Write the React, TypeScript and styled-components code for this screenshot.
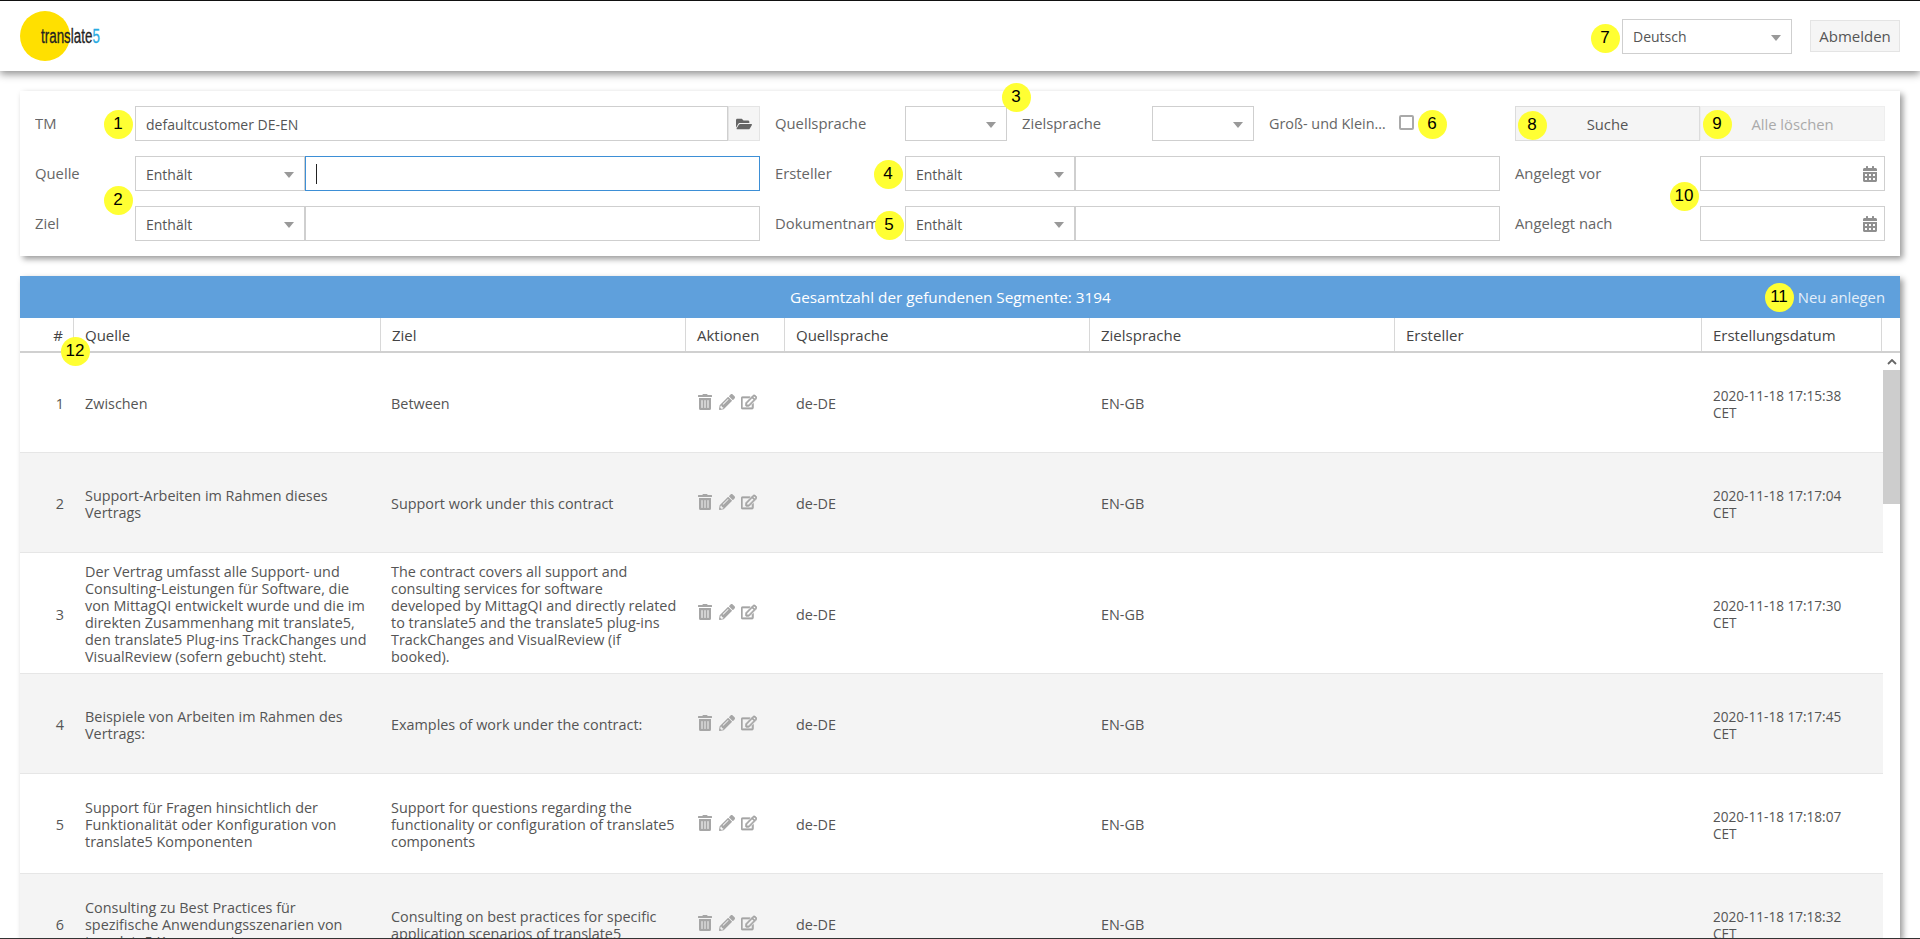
import React from 'react';
import styled, { createGlobalStyle } from 'styled-components';
import {
  FaCalendarAlt,
  FaFolderOpen,
  FaPencilAlt,
  FaRegEdit,
  FaTrashAlt,
} from 'react-icons/fa';

const GlobalStyle = createGlobalStyle`
  html, body {
    margin: 0;
    height: 100%;
    overflow: hidden;
    background: #fff;
  }
  body {
    font-family: "Open Sans", "Liberation Sans", sans-serif;
    font-size: 14px;
    color: #555;
  }
  * {
    box-sizing: border-box;
  }
`;

const Page = styled.div`
  position: relative;
  display: flex;
  flex-direction: column;
  height: 939px;
  overflow: hidden;
  border-top: 1px solid #111;
  border-bottom: 1px solid #333;
`;

const TopBar = styled.header`
  flex: none;
  display: flex;
  align-items: center;
  justify-content: space-between;
  height: 70px;
  padding: 0 20px;
  background: #fff;
  box-shadow: 0 3px 8px rgba(0, 0, 0, 0.45);
`;

const Logo = styled.div`
  display: flex;
  align-items: center;
  width: 50px;
  height: 50px;
  padding-left: 21px;
  border-radius: 50%;
  background: #ffe000;
  white-space: nowrap;
`;

const LogoText = styled.span`
  display: inline-block;
  font-family: "Liberation Sans", sans-serif;
  font-size: 20px;
  color: #222;
  transform: scaleX(0.67);
  transform-origin: left center;
  -webkit-text-stroke: 0.3px #222;
  span {
    color: #29abe2;
    -webkit-text-stroke: 0.3px #29abe2;
  }
`;

const TopActions = styled.div`
  display: flex;
  align-items: center;
`;

const FilterPanel = styled.section`
  flex: none;
  display: grid;
  grid-template-columns: 100px 625px 145px 595px 200px 185px;
  grid-auto-rows: 35px;
  row-gap: 15px;
  align-items: center;
  margin: 20px 20px 0;
  padding: 15px 15px 15px;
  background: #fff;
  box-shadow: 3px 3px 6px rgba(0, 0, 0, 0.4);
`;

const Label = styled.label<{ $inset?: number }>`
  padding-left: ${(p) => p.$inset ?? 0}px;
  margin-top: -1px;
  font-size: 14.8px;
  white-space: nowrap;
  overflow: hidden;
  color: #666;
`;

const InlineLabel = styled.label<{ $width: number; $left: number }>`
  flex: none;
  width: ${(p) => p.$width}px;
  margin-left: ${(p) => p.$left}px;
  margin-top: -1px;
  font-size: 14.8px;
  white-space: nowrap;
  overflow: hidden;
  text-overflow: ellipsis;
  color: #666;
`;

const TruncatedLabel = styled(InlineLabel)`
  font-size: 14.4px;
`;

const FieldGroup = styled.div`
  display: flex;
  height: 35px;
  align-items: center;
`;

const ButtonCell = styled.div`
  padding-left: 15px;
  height: 35px;
`;

const Field = styled.div<{ $focused?: boolean; $width?: number }>`
  position: relative;
  display: flex;
  align-items: center;
  flex: ${(p) => (p.$width ? 'none' : '1')};
  width: ${(p) => (p.$width ? `${p.$width}px` : 'auto')};
  height: 35px;
  padding: 1px 10px 0;
  background: #fff;
  border: 1px solid ${(p) => (p.$focused ? '#3d8fd6' : '#cfcfcf')};
  color: #555;
`;

const Caret = styled.i`
  display: block;
  width: 1px;
  height: 20px;
  background: #222;
`;

const SelectArrow = styled.i`
  position: absolute;
  right: 10px;
  top: 15px;
  width: 0;
  height: 0;
  border-left: 5px solid transparent;
  border-right: 5px solid transparent;
  border-top: 6px solid #999;
`;

const DateIcon = styled(FaCalendarAlt)`
  position: absolute;
  right: 7px;
  top: 9px;
  width: 14px;
  height: 16px;
  color: #8f8f8f;
`;

const FolderButton = styled.button`
  flex: none;
  display: flex;
  align-items: center;
  justify-content: center;
  width: 32px;
  height: 35px;
  padding: 0;
  background: #f5f5f5;
  border: 1px solid #e4e4e4;
  color: #666;
  font-size: 16px;
`;

const ActionButton = styled.button<{ $disabled?: boolean }>`
  width: ${(p) => (p.$disabled ? '185px' : '100%')};
  height: 35px;
  padding: 0;
  background: #f5f5f5;
  border: 1px solid ${(p) => (p.$disabled ? '#eee' : '#dcdcdc')};
  color: ${(p) => (p.$disabled ? '#aaa' : '#555')};
  font: inherit;
  font-size: 14.8px;
`;

const LogoutButton = styled.button`
  width: 90px;
  height: 32px;
  margin-left: 18px;
  padding: 0;
  background: #f5f5f5;
  border: 1px solid #e4e4e4;
  color: #555;
  font: inherit;
  font-size: 15px;
`;

const CheckBox = styled.span`
  flex: none;
  width: 15px;
  height: 15px;
  margin-left: 12px;
  margin-top: -2px;
  background: #fff;
  border: 2px solid #a9a9a9;
  border-radius: 2px;
`;

const Grid = styled.section`
  flex: 1;
  min-height: 0;
  display: flex;
  flex-direction: column;
  margin: 20px 20px 0;
  background: #fff;
  box-shadow: 3px 3px 6px rgba(0, 0, 0, 0.4);
`;

const TitleBar = styled.div`
  flex: none;
  display: flex;
  align-items: center;
  height: 42px;
  padding: 0 15px 0 83px;
  background: #5fa0dc;
  color: #fff;
`;

const Title = styled.div`
  flex: 1;
  text-align: center;
  font-size: 15.3px;
`;

const AddLink = styled.a`
  color: #e4effa;
  font-size: 14.8px;
`;

const columns = '54px 307px 305px 99px 305px 305px 307px 180px';

const HeaderRow = styled.div`
  flex: none;
  display: flex;
  height: 35px;
  border-bottom: 2px solid #d0d0d0;
`;

const HeaderCols = styled.div`
  flex: none;
  display: grid;
  width: 1862px;
  grid-template-columns: ${columns};
`;

const HeaderCell = styled.div<{ $right?: boolean }>`
  display: flex;
  align-items: center;
  justify-content: ${(p) => (p.$right ? 'flex-end' : 'flex-start')};
  padding: 0 10px 0 11px;
  border-right: 1px solid #d8d8d8;
  color: #444;
  font-size: 15px;
`;

const HeaderFiller = styled.div`
  flex: 1;
`;

const Body = styled.div`
  flex: 1;
  min-height: 0;
  display: flex;
  overflow: hidden;
`;

const Rows = styled.div`
  flex: none;
  width: 1863px;
`;

const Row = styled.div<{ $alt: boolean }>`
  display: grid;
  grid-template-columns: ${columns};
  min-height: 100px;
  align-items: center;
  line-height: 17px;
  background: ${(p) => (p.$alt ? '#f4f4f4' : '#fff')};
  border-bottom: 1px solid #e6e6e6;
`;

const Cell = styled.div<{ $right?: boolean }>`
  padding: 10px 10px 8px 11px;
  text-align: ${(p) => (p.$right ? 'right' : 'left')};
  font-size: 14.4px;
`;

const TargetCell = styled(Cell)`
  padding-left: 10px;
  padding-right: 6px;
`;

const DateCell = styled(Cell)`
  padding-right: 30px;
  font-size: 13.6px;
`;

const Actions = styled.div`
  display: flex;
  align-items: center;
  gap: 6px;
  margin-top: -2px;
  padding-left: 11px;
  color: #a6a6a6;
  font-size: 16px;
`;

const EditIcon = styled(FaRegEdit)`
  stroke: currentColor;
  stroke-width: 24;
`;

const ScrollBar = styled.div`
  flex: 1;
  display: flex;
  flex-direction: column;
`;

const ScrollArrow = styled.div`
  display: flex;
  align-items: center;
  justify-content: center;
  height: 17px;
  svg {
    display: block;
  }
`;

const ScrollThumb = styled.div`
  height: 134px;
  background: #cdcdcd;
`;

const Marker = styled.span<{ $x: number; $y: number }>`
  position: absolute;
  left: ${(p) => p.$x - 14.5}px;
  top: ${(p) => p.$y - 15.5}px;
  display: flex;
  align-items: center;
  justify-content: center;
  width: 29px;
  height: 29px;
  border-radius: 50%;
  background: #ffff33;
  color: #000;
  font-family: "Liberation Sans", sans-serif;
  font-size: 17px;
`;

const markers: [number, number, number][] = [
  [1, 118, 124],
  [2, 118, 200],
  [3, 1016, 97],
  [4, 888, 174],
  [5, 889, 225],
  [6, 1432, 124],
  [7, 1605, 38],
  [8, 1532, 125],
  [9, 1717, 124],
  [10, 1684, 196],
  [11, 1779, 297],
  [12, 75, 351],
];

const headers = [
  '#',
  'Quelle',
  'Ziel',
  'Aktionen',
  'Quellsprache',
  'Zielsprache',
  'Ersteller',
  'Erstellungsdatum',
];

const segments = [
  ['Zwischen', 'Between', '2020-11-18 17:15:38 CET'],
  [
    'Support-Arbeiten im Rahmen dieses Vertrags',
    'Support work under this contract',
    '2020-11-18 17:17:04 CET',
  ],
  [
    'Der Vertrag umfasst alle Support- und Consulting-Leistungen für Software, die von MittagQI entwickelt wurde und die im direkten Zusammenhang mit translate5, den translate5 Plug-ins TrackChanges und VisualReview (sofern gebucht) steht.',
    'The contract covers all support and consulting services for software developed\u00a0by MittagQI and directly related to translate5 and the translate5 plug-ins TrackChanges and VisualReview (if booked).',
    '2020-11-18 17:17:30 CET',
  ],
  [
    'Beispiele von Arbeiten im Rahmen des Vertrags:',
    'Examples of work under the contract:',
    '2020-11-18 17:17:45 CET',
  ],
  [
    'Support für Fragen hinsichtlich der Funktionalität oder Konfiguration von translate5 Komponenten',
    'Support for questions regarding the functionality or configuration of translate5 components',
    '2020-11-18 17:18:07 CET',
  ],
  [
    'Consulting zu Best Practices für spezifische Anwendungsszenarien von translate5 Komponenten',
    'Consulting on best practices for specific application scenarios of translate5',
    '2020-11-18 17:18:32 CET',
  ],
];

const Select: React.FC<{ value?: string; width: number }> = ({
  value,
  width,
}) => (
  <Field $width={width}>
    {value}
    <SelectArrow />
  </Field>
);

const App: React.FC = () => {
  return (
    <Page>
      <GlobalStyle />
      <TopBar>
        <Logo>
          <LogoText>
            translate<span>5</span>
          </LogoText>
        </Logo>
        <TopActions>
          <Select value="Deutsch" width={170} />
          <LogoutButton>Abmelden</LogoutButton>
        </TopActions>
      </TopBar>

      <FilterPanel>
        <Label>TM</Label>
        <FieldGroup>
          <Field>defaultcustomer DE-EN</Field>
          <FolderButton>
            <FaFolderOpen />
          </FolderButton>
        </FieldGroup>
        <Label $inset={15}>Quellsprache</Label>
        <FieldGroup>
          <Select width={102} />
          <InlineLabel $width={130} $left={15}>
            Zielsprache
          </InlineLabel>
          <Select width={102} />
          <TruncatedLabel $width={118} $left={15}>
            Groß- und Kleinschreibung
          </TruncatedLabel>
          <CheckBox />
        </FieldGroup>
        <ButtonCell>
          <ActionButton>Suche</ActionButton>
        </ButtonCell>
        <ActionButton $disabled>Alle löschen</ActionButton>

        <Label>Quelle</Label>
        <FieldGroup>
          <Select value="Enthält" width={170} />
          <Field $focused>
            <Caret />
          </Field>
        </FieldGroup>
        <Label $inset={15}>Ersteller</Label>
        <FieldGroup>
          <Select value="Enthält" width={170} />
          <Field />
        </FieldGroup>
        <Label $inset={15}>Angelegt vor</Label>
        <Field>
          <DateIcon />
        </Field>

        <Label>Ziel</Label>
        <FieldGroup>
          <Select value="Enthält" width={170} />
          <Field />
        </FieldGroup>
        <Label $inset={15}>Dokumentname</Label>
        <FieldGroup>
          <Select value="Enthält" width={170} />
          <Field />
        </FieldGroup>
        <Label $inset={15}>Angelegt nach</Label>
        <Field>
          <DateIcon />
        </Field>
      </FilterPanel>

      <Grid>
        <TitleBar>
          <Title>Gesamtzahl der gefundenen Segmente: 3194</Title>
          <AddLink>Neu anlegen</AddLink>
        </TitleBar>
        <HeaderRow>
          <HeaderCols>
            {headers.map((h, i) => (
              <HeaderCell key={h} $right={i === 0}>
                {h}
              </HeaderCell>
            ))}
          </HeaderCols>
          <HeaderFiller />
        </HeaderRow>
        <Body>
          <Rows>
            {segments.map(([source, target, date], i) => (
              <Row key={date} $alt={i % 2 === 1}>
                <Cell $right>{i + 1}</Cell>
                <Cell>{source}</Cell>
                <TargetCell>{target}</TargetCell>
                <Actions>
                  <FaTrashAlt />
                  <FaPencilAlt />
                  <EditIcon />
                </Actions>
                <Cell>de-DE</Cell>
                <Cell>EN-GB</Cell>
                <Cell />
                <DateCell>{date}</DateCell>
              </Row>
            ))}
          </Rows>
          <ScrollBar>
            <ScrollArrow>
              <svg width="10" height="6" viewBox="0 0 10 6">
                <path
                  d="M1 5 L5 1 L9 5"
                  fill="none"
                  stroke="#666"
                  strokeWidth="1.8"
                />
              </svg>
            </ScrollArrow>
            <ScrollThumb />
          </ScrollBar>
        </Body>
      </Grid>

      {markers.map(([n, x, y]) => (
        <Marker key={n} $x={x} $y={y}>
          {n}
        </Marker>
      ))}
    </Page>
  );
};

export default App;
